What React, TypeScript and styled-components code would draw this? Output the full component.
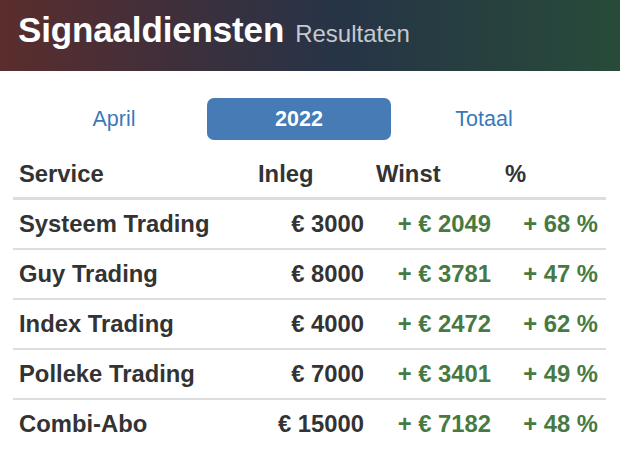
import React from "react";
import styled, { createGlobalStyle } from "styled-components";

const GlobalStyle = createGlobalStyle`
  html, body { margin: 0; padding: 0; background: #ffffff; }
  body { font-family: "Liberation Sans", Arial, Helvetica, sans-serif; }
`;

const Page = styled.div`
  width: 620px;
  height: 456px;
  overflow: hidden;
  background: #ffffff;
`;

const Header = styled.header`
  height: 71px;
  box-sizing: border-box;
  padding: 0 18px;
  display: flex;
  align-items: baseline;
  gap: 11px;
  background: linear-gradient(90deg, #5b2d2d 0%, #3f2f3b 28%, #263447 55%, #27403f 78%, #284b39 100%);
`;

const Title = styled.h1`
  margin: 0;
  padding-top: 10px;
  font-size: 35px;
  line-height: 40px;
  font-weight: 700;
  color: #ffffff;
  letter-spacing: -0.15px;
`;

const Subtitle = styled.span`
  font-size: 24px;
  font-weight: 400;
  color: #c6c9cd;
`;

const Tabs = styled.nav`
  display: flex;
  gap: 1px;
  margin-top: 27px;
  padding-left: 22px;
`;

const Tab = styled.button<{ $active?: boolean }>`
  width: 184px;
  height: 42px;
  border: none;
  border-radius: 7px;
  padding: 0;
  font-family: "Liberation Sans", Arial, sans-serif;
  font-size: 21.5px;
  font-weight: ${(p) => (p.$active ? 700 : 400)};
  color: ${(p) => (p.$active ? "#ffffff" : "#3b78b9")};
  background: ${(p) => (p.$active ? "#467bb5" : "transparent")};
  cursor: pointer;
`;

const Table = styled.table`
  margin: 10px 0 0 13px;
  width: 593px;
  border-collapse: separate;
  border-spacing: 0;
  table-layout: fixed;
  font-size: 23.8px;
  font-weight: 700;
  color: #333333;
`;

const Th = styled.th`
  text-align: left;
  padding: 10px 6px 9px;
  line-height: 28px;
  border-bottom: 3px solid #dddddd;
  font-weight: 700;
  white-space: nowrap;
`;

const Row = styled.tr`
  &:not(:first-child) > td {
    border-top: 2px solid #dddddd;
  }
`;

const Td = styled.td<{ $align?: "left" | "right"; $green?: boolean }>`
  padding: 10px ${(p) => (p.$green ? "8px" : "6px")} 10px 6px;
  line-height: 28px;
  text-align: ${(p) => p.$align ?? "left"};
  color: ${(p) => (p.$green ? "#477a42" : "#333333")};
  white-space: nowrap;
`;

const rows = [
  { name: "Systeem Trading", inleg: "€ 3000", winst: "+ € 2049", pct: "+ 68 %" },
  { name: "Guy Trading", inleg: "€ 8000", winst: "+ € 3781", pct: "+ 47 %" },
  { name: "Index Trading", inleg: "€ 4000", winst: "+ € 2472", pct: "+ 62 %" },
  { name: "Polleke Trading", inleg: "€ 7000", winst: "+ € 3401", pct: "+ 49 %" },
  { name: "Combi-Abo", inleg: "€ 15000", winst: "+ € 7182", pct: "+ 48 %" },
];

export default function App() {
  return (
    <Page>
      <GlobalStyle />
      <Header>
        <Title>Signaaldiensten</Title>
        <Subtitle>Resultaten</Subtitle>
      </Header>
      <Tabs>
        <Tab>April</Tab>
        <Tab $active>2022</Tab>
        <Tab>Totaal</Tab>
      </Tabs>
      <Table>
        <colgroup>
          <col style={{ width: 239 }} />
          <col style={{ width: 118 }} />
          <col style={{ width: 129 }} />
          <col style={{ width: 107 }} />
        </colgroup>
        <thead>
          <tr>
            <Th>Service</Th>
            <Th>Inleg</Th>
            <Th>Winst</Th>
            <Th>%</Th>
          </tr>
        </thead>
        <tbody>
          {rows.map((r) => (
            <Row key={r.name}>
              <Td>{r.name}</Td>
              <Td $align="right">{r.inleg}</Td>
              <Td $align="right" $green>{r.winst}</Td>
              <Td $align="right" $green>{r.pct}</Td>
            </Row>
          ))}
        </tbody>
      </Table>
    </Page>
  );
}
